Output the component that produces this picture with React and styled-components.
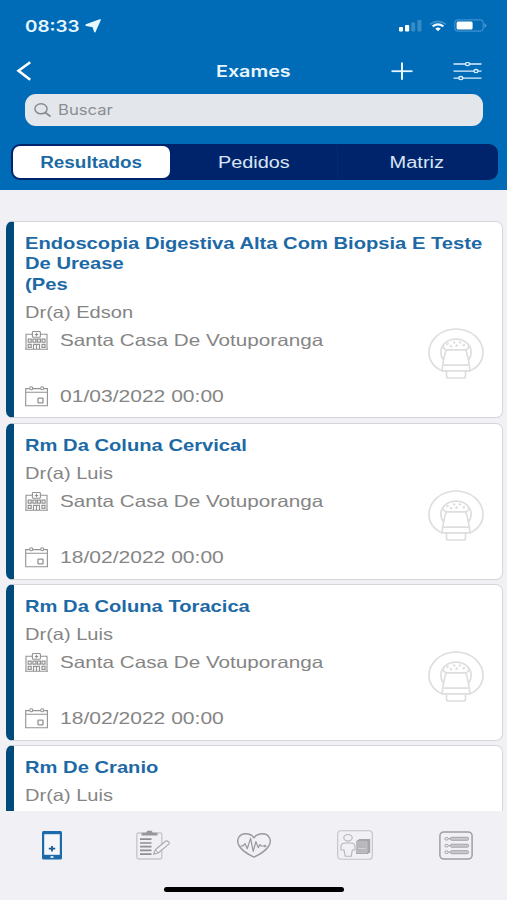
import React from 'react';
import styled, { createGlobalStyle } from 'styled-components';

const GlobalStyle = createGlobalStyle`
  * { box-sizing: border-box; }
  body { margin: 0; background: #f0f0f5; }
  svg { display: block; flex: none; }
`;

const Screen = styled.div`
  width: 507px;
  height: 900px;
  display: flex;
  flex-direction: column;
  overflow: hidden;
  background: #f0f0f5;
  font-family: 'Liberation Sans', Arial, sans-serif;
`;

/* Text drawn with a wide set, as on a stretched display */
const Wide = styled.span`
  display: inline-block;
  white-space: nowrap;
  transform: scaleX(${(p) => p.$sx});
  transform-origin: ${(p) => p.$origin || 'left'} center;
`;

const Header = styled.header`
  height: 190px;
  flex: none;
  background: #006cb7;
  color: #fff;
`;

const StatusBar = styled.div`
  height: 51px;
  padding: 0 20px 0 25px;
  display: flex;
  justify-content: space-between;
  align-items: center;
`;

const Clock = styled.div`
  width: 76px;
  display: flex;
  justify-content: space-between;
  align-items: center;
  color: #e6f7ff;
  font: 600 16px/20px Inter, sans-serif;
`;

const ClockText = styled.div`
  width: 58px;
`;

const StatusIcons = styled.div`
  display: flex;
  align-items: center;
  gap: 7px;
`;

const NavBar = styled.div`
  height: 40px;
  padding: 0 25px 0 16px;
  display: grid;
  grid-template-columns: 150px 1fr 150px;
  align-items: center;
`;

const NavTitle = styled.h1`
  margin: 0 0 0 9px;
  text-align: center;
  color: #e9f6ff;
  font: 600 16px/20px Inter, sans-serif;
`;

const NavActions = styled.div`
  display: flex;
  justify-content: flex-end;
  align-items: center;
  gap: 40px;
`;

const SearchField = styled.div`
  height: 32px;
  margin: 3px 24px 0 25px;
  padding-left: 9px;
  display: flex;
  align-items: center;
  gap: 7px;
  border-radius: 11px;
  background: #e3e6ea;
  color: #8b8e93;
  font: 400 14.5px/20px Inter, sans-serif;
`;

const Segments = styled.div`
  height: 36px;
  margin: 18px 9px 0 11px;
  padding: 2px;
  display: grid;
  grid-template-columns: 157px 168px 1fr;
  border-radius: 9px;
  background: #00246b;
`;

const Segment = styled.div`
  display: flex;
  justify-content: center;
  align-items: center;
  padding-top: 1px;
  border-radius: ${(p) => (p.$active ? 7 : 0)}px;
  border-right: ${(p) => (p.$divider ? '1px solid #06296f' : '0')};
  background: ${(p) => (p.$active ? '#fff' : 'transparent')};
  color: ${(p) => (p.$active ? '#1b69a5' : '#d9e4f5')};
  font-size: 16px;
  font-weight: ${(p) => (p.$active ? 700 : 400)};
`;

const List = styled.main`
  flex: 1;
  min-height: 0;
  overflow: hidden;
  padding: 31px 4px 0 6px;
  display: flex;
  flex-direction: column;
  gap: 4.4px;
`;

const Card = styled.article`
  flex: none;
  min-height: 156.8px;
  display: flex;
  justify-content: space-between;
  align-items: flex-start;
  padding: 11px 18px 7px 11px;
  border: 1px solid #d6d6da;
  border-left: 8px solid #004a7c;
  border-radius: 7px;
  background: #fff;
`;

const CardBody = styled.div`
  width: 300px;
  color: #858585;
  font-size: 16.5px;
`;

const CardTitle = styled.h2`
  margin: 0 0 4.2px;
  color: #1c69a6;
  font-size: 16.5px;
  line-height: 20.4px;
  font-weight: 700;
`;

const TitleLine = styled.div`
  height: 20.4px;
`;

const Line = styled.div`
  height: 28px;
  display: flex;
  align-items: center;
  gap: 11.5px;
  margin-top: ${(p) => p.$top || 0}px;
`;

const ScannerSlot = styled.div`
  align-self: flex-end;
  margin-bottom: 31px;
`;

const TabBar = styled.nav`
  height: 68px;
  flex: none;
  padding: 0 1px;
  display: grid;
  grid-template-columns: repeat(5, 1fr);
  align-items: center;
  justify-items: center;
`;

const HomeArea = styled.div`
  height: 21px;
  flex: none;
  padding: 8px 0 0 164px;
`;

const HomeIndicator = styled.div`
  width: 180px;
  height: 5px;
  border-radius: 3px;
  background: #000;
`;

const LocationArrow = () => (
  <svg width="16" height="14" viewBox="0 0 16 14">
    <path d="M15 .9 9.8 12.6 8.2 7.4 1.2 6.1Z" fill="#e6f7ff" stroke="#e6f7ff" strokeWidth="1.6" strokeLinejoin="round" />
  </svg>
);

const Signal = () => (
  <svg width="23" height="12" viewBox="0 0 23 12" fill="#fff">
    <rect x="0" y="7" width="4" height="4.6" rx="1" />
    <rect x="6" y="5" width="4.2" height="6.6" rx="1" />
    <rect x="12.2" y="2.5" width="4" height="9.1" rx="1" opacity=".22" />
    <rect x="18.4" y="0" width="4" height="11.6" rx="1" opacity=".22" />
  </svg>
);

const Wifi = () => (
  <svg width="18" height="12" viewBox="0 0 19 12" fill="none" strokeWidth="2">
    <path d="M1 4.2Q9.5-2 18 4.2" stroke="#3f90cc" strokeWidth="1.6" />
    <path d="M3.8 6.5Q9.5 2.3 15.2 6.5" stroke="#e9f8ff" strokeWidth="2.3" />
    <path d="m6.6 8.7 2.9 2.8 2.9-2.8Q9.5 6.7 6.6 8.7Z" fill="#fff" />
  </svg>
);

const Battery = () => (
  <svg width="33" height="13" viewBox="0 0 33 13">
    <rect x=".8" y=".8" width="28.4" height="11.4" rx="3.5" fill="none" stroke="#4090cd" strokeWidth="1.2" />
    <rect x="2.6" y="2.4" width="16" height="8.2" rx="1.5" fill="#fff" />
    <path d="M30.4 4.3q2 .7 2 2.2t-2 2.2Z" fill="#4c99d2" />
  </svg>
);

const Back = () => (
  <svg width="16" height="20" viewBox="0 0 16 20" fill="none" stroke="#fff" strokeWidth="2.6">
    <path d="M14.2 1.2 2.5 9.8l11.7 9" />
  </svg>
);

const Plus = () => (
  <svg width="22" height="18" viewBox="0 0 22 18" stroke="#e7f5ff">
    <path d="M.5 9.2h21" strokeWidth="1.8" />
    <path d="M11 .5v17.3" strokeWidth="2" />
  </svg>
);

const Sliders = () => (
  <svg width="29" height="19" viewBox="0 0 29 19" fill="#006cb7" stroke="#dcefff" strokeWidth="1.3">
    <path d="M.5 2h28M.5 9.1h28M.5 16.1h28" />
    <ellipse cx="14.5" cy="2" rx="2" ry="1.6" />
    <ellipse cx="23" cy="9.1" rx="2" ry="1.6" />
    <ellipse cx="7.8" cy="16.1" rx="2" ry="1.6" />
  </svg>
);

const SearchIcon = () => (
  <svg width="17" height="14" viewBox="0 0 17 14" fill="none" stroke="#85888c" strokeWidth="1.4">
    <ellipse cx="7" cy="5.8" rx="6.1" ry="5" />
    <path d="m11.2 9.5 5.3 4" strokeWidth="1.6" />
  </svg>
);

const Hospital = () => (
  <svg width="23" height="19" viewBox="0 0 23 19" fill="none" stroke="#929292" strokeWidth="1.1">
    <path d="M7.5 3.2H1v14.5M15.5 3.2H22v14.5M0 18.2h23" />
    <path d="M7.4 5.3V1.5q0-1 1-1h6q1 0 1 1v3.8q0 1-1 1h-6q-1 0-1-1Z" />
    <path d="M11.5 1.8v3.4M9.8 3.5h3.4" strokeWidth="1.2" />
    <path d="M3.2 8.2h3v3h-3zM7.9 8.2h3v3h-3zM12.4 8.2h3v3h-3zM17 8.2h3v3h-3zM3.2 13.3h3v3h-3zM17 13.3h3v3h-3zM8.5 18v-4.7h6V18M11.5 13.3V18" strokeWidth="1.2" />
  </svg>
);

const Calendar = () => (
  <svg width="23" height="21" viewBox="0 0 23 21" fill="none" stroke="#929292" strokeWidth="1.1">
    <path d="M4.2 2.6H.7v17.2h21.7V2.6h-3.2M8 2.6h7.5M.7 6.2h21.7" />
    <rect x="4.7" y=".8" width="3" height="3" rx="1.2" />
    <rect x="15.7" y=".8" width="3" height="3" rx="1.2" />
    <rect x="13" y="12.2" width="5" height="4.6" rx=".6" strokeWidth="1.3" />
  </svg>
);

const Scanner = () => (
  <svg width="56" height="51" viewBox="0 0 56 51" fill="none" stroke="#dedede" strokeWidth="1.7" strokeLinejoin="round">
    <path d="M14.6 43C6.3 40 1 33 1 24.6 1 11.6 13.1 1 28 1s27 10.6 27 23.6c0 8.4-5.3 15.4-13.6 18.4" />
    <path d="M15.6 32c-2-2.3-2.7-5-2.7-8 0-7.4 6.5-12.8 15.1-12.8S43.1 16.6 43.1 24c0 3-.7 5.7-2.7 8" />
    <path d="M18.6 21.8c-3-.4-4.3-2.8-2.6-5.2M37.4 21.8c3-.4 4.3-2.8 2.6-5.2" />
    <path d="M18.2 21.8h19.6q3 9 4.2 21H14q1.2-12 4.2-21Z" fill="#fff" />
    <path d="M15.2 37.2h25.6M18.5 43v5q0 2 2 2h15q2 0 2-2v-5" />
    <path d="m18.4 16.8 2.2-1.6M22 17.4l2 1.6M25.2 13.8l2 1.4M27.6 18.6l2-1.8M31 13.8l2 1.4M34.8 18l2-1.8" strokeWidth="2" />
  </svg>
);

const PhoneIcon = () => (
  <svg width="20" height="29" viewBox="0 0 20 29">
    <rect width="20" height="28.5" rx="1.5" fill="#1b6aa9" />
    <rect x="2.2" y="3.2" width="15.6" height="20.6" fill="#f4f6fa" />
    <path d="M10 15v5.4M6.8 17.7h6.4" stroke="#1b5a8e" strokeWidth="1.8" />
    <ellipse cx="10" cy="26" rx="1.7" ry="1.1" fill="#edf5fb" />
  </svg>
);

const ClipboardIcon = () => (
  <svg width="34" height="30" viewBox="0 0 34 30" fill="none">
    <rect x=".8" y="3" width="25" height="26" rx="1.5" stroke="#c6c6ca" strokeWidth="1.3" />
    <path d="M5.5 5.5V3.8q0-1 1.5-1h3.3L11 1q2.6-1.2 5 0l.7 1.8H20q1.5 0 1.5 1v1.7Z" fill="#97979b" />
    <path d="M4 9.2h11.5M4 13h11.5M4 16.6h11.5M4 20.3h11.5M4 24.1h11.5" stroke="#8f8f93" strokeWidth="1.7" />
    <path d="m17.5 24.2 2-4.7 10-8.3q1.4-.9 3 .4 1.4 1.2.2 2.5L22.2 23Z" fill="#f3f3f6" stroke="#aaaab0" strokeWidth="1.2" strokeLinejoin="round" />
    <path d="m19.5 19.5 2.7 3.5" stroke="#aaaab0" />
  </svg>
);

const HeartIcon = () => (
  <svg width="34" height="25" viewBox="0 0 34 25" fill="none" stroke="#98989d" strokeLinejoin="round">
    <path d="M17 24.1Q6.5 19.4 2.2 13C-1.6 6.6 2.6.8 8.5.8c4 0 6.8 1.6 8.5 4C18.7 2.4 21.5.8 25.5.8c5.9 0 10.1 5.8 6.3 12.2Q27.5 19.4 17 24.1Z" strokeWidth="1.4" />
    <path d="M3.7 12.8h2.5L8 10.5l2.2 5.2 3.4-10.3 2.6 13 2.7-9.8 2.3 6 1.8-3 1.4 1.4h3.2" strokeWidth="1.2" />
    <ellipse cx="28" cy="13" rx="1.1" ry=".8" fill="#98989d" />
  </svg>
);

const RecordIcon = () => (
  <svg width="36" height="30" viewBox="0 0 36 30" fill="none" stroke="#b6b6ba" strokeWidth="1.1">
    <rect x=".7" y=".7" width="34.6" height="28.6" rx="3" stroke="#c2c2c6" />
    <ellipse cx="11" cy="7.8" rx="4.2" ry="3.3" />
    <path d="M8 13h6q3.8 0 4 3.5V20h-2.7l-1 6.2H8.2L7 20H4v-3.5Q4.2 13 8 13Z" />
    <path d="M19 11.2 22.3 9h10.9v13.5L30.7 24H19Z" fill="#a5a5a9" stroke="none" />
    <rect x="19.6" y="11.7" width="10.4" height="11" rx=".5" fill="#b8b8bc" stroke="#c8c8cc" strokeWidth=".7" />
    <path d="M21.5 18.5h7" stroke="#dcdcdf" strokeWidth=".8" />
  </svg>
);

const MenuIcon = () => (
  <svg width="34" height="29" viewBox="0 0 34 29" fill="none" stroke="#9e9ea3">
    <rect x=".9" y=".9" width="32.2" height="27.2" rx="4" strokeWidth="1.5" />
    {[7.8, 14.7, 21.2].map((y) => (
      <g key={y}>
        <ellipse cx="7.6" cy={y} rx="1.8" ry="1.3" />
        <path d={`M9.5 ${y}h2`} />
        <rect x="11.5" y={y - 1.5} width="18" height="3" rx="1" fill="#c9c9cd" strokeWidth=".9" />
      </g>
    ))}
  </svg>
);

const exams = [
  {
    title: ['Endoscopia Digestiva Alta Com Biopsia E Teste', 'De Urease', '(Pes'],
    doctor: 'Dr(a) Edson',
    place: 'Santa Casa De Votuporanga',
    date: '01/03/2022 00:00',
  },
  {
    title: ['Rm Da Coluna Cervical'],
    doctor: 'Dr(a) Luis',
    place: 'Santa Casa De Votuporanga',
    date: '18/02/2022 00:00',
  },
  {
    title: ['Rm Da Coluna Toracica'],
    doctor: 'Dr(a) Luis',
    place: 'Santa Casa De Votuporanga',
    date: '18/02/2022 00:00',
  },
  { title: ['Rm De Cranio'], doctor: 'Dr(a) Luis' },
];

const ExamCard = ({ exam }) => (
  <Card>
    <CardBody>
      <CardTitle>
        {exam.title.map((text) => (
          <TitleLine key={text}><Wide $sx={1.222}>{text}</Wide></TitleLine>
        ))}
      </CardTitle>
      <Line><Wide $sx={1.215}>{exam.doctor}</Wide></Line>
      {exam.place && <Line><Hospital /><Wide $sx={1.253}>{exam.place}</Wide></Line>}
      {exam.date && <Line $top={28}><Calendar /><Wide $sx={1.275}>{exam.date}</Wide></Line>}
    </CardBody>
    <ScannerSlot><Scanner /></ScannerSlot>
  </Card>
);

export default function App() {
  return (
    <>
      <GlobalStyle />
      <Screen>
        <Header>
          <StatusBar>
            <Clock>
              <ClockText><Wide $sx={1.18}>08:33</Wide></ClockText>
              <LocationArrow />
            </Clock>
            <StatusIcons><Signal /><Wifi /><Battery /></StatusIcons>
          </StatusBar>
          <NavBar>
            <Back />
            <NavTitle><Wide $sx={1.23} $origin="center">Exames</Wide></NavTitle>
            <NavActions><Plus /><Sliders /></NavActions>
          </NavBar>
          <SearchField><SearchIcon /><Wide $sx={1.15}>Buscar</Wide></SearchField>
          <Segments>
            <Segment $active><Wide $sx={1.18} $origin="center">Resultados</Wide></Segment>
            <Segment $divider><Wide $sx={1.24} $origin="center">Pedidos</Wide></Segment>
            <Segment><Wide $sx={1.25} $origin="center">Matriz</Wide></Segment>
          </Segments>
        </Header>
        <List>
          {exams.map((exam) => <ExamCard key={exam.title[0]} exam={exam} />)}
        </List>
        <TabBar>
          <PhoneIcon />
          <ClipboardIcon />
          <HeartIcon />
          <RecordIcon />
          <MenuIcon />
        </TabBar>
        <HomeArea><HomeIndicator /></HomeArea>
      </Screen>
    </>
  );
}
